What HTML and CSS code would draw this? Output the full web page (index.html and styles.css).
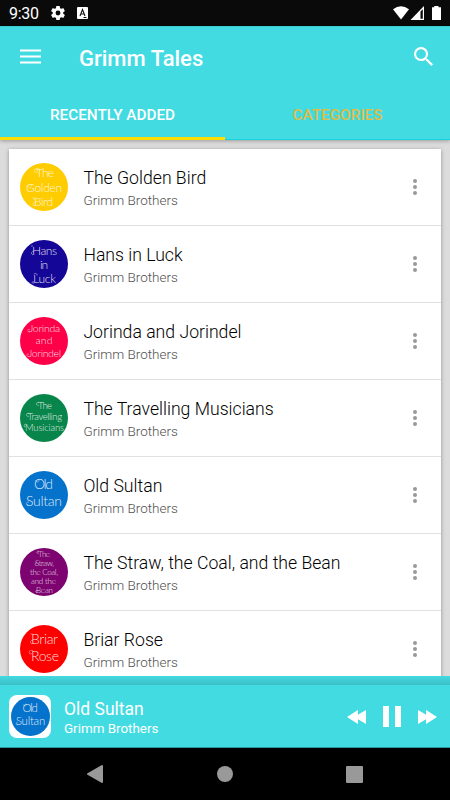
FILE: index.html
```html
<!DOCTYPE html>
<html lang="en">
<head>
<meta charset="utf-8">
<title>Grimm Tales</title>
<link rel="stylesheet" href="styles.css">
</head>
<body>
<div class="status">
  <span class="clock">9:30</span>
  <svg class="gear" width="14" height="14" viewBox="2 2 20 20"><path fill="#fff" d="M19.43 12.98c.04-.32.07-.64.07-.98s-.03-.66-.07-.98l2.11-1.65c.19-.15.24-.42.12-.64l-2-3.46c-.12-.22-.39-.3-.61-.22l-2.49 1c-.52-.4-1.08-.73-1.69-.98l-.38-2.65C14.46 2.18 14.25 2 14 2h-4c-.25 0-.46.18-.49.42l-.38 2.65c-.61.25-1.17.59-1.69.98l-2.49-1c-.23-.09-.49 0-.61.22l-2 3.46c-.13.22-.07.49.12.64l2.11 1.65c-.04.32-.07.65-.07.98s.03.66.07.98l-2.11 1.65c-.19.15-.24.42-.12.64l2 3.46c.12.22.39.3.61.22l2.49-1c.52.4 1.08.73 1.69.98l.38 2.65c.03.24.24.42.49.42h4c.25 0 .46-.18.49-.42l.38-2.65c.61-.25 1.17-.59 1.69-.98l2.49 1c.23.09.49 0 .61-.22l2-3.46c.12-.22.07-.49-.12-.64zM12 15.5a3.5 3.5 0 1 1 0-7 3.500 3.500 0 0 1 0 7z"/></svg>
  <svg class="lang" width="11" height="12" viewBox="0 0 11 12"><rect width="11" height="12" rx="1" fill="#fff"/><path d="M3 9 5.500 2.500 8 9M4 7h3M6.500 10.500h3" fill="none" stroke="#111" stroke-width="1.100"/></svg>
  <svg class="signals" width="49" height="15" viewBox="0 0 49 15"><path fill="#fff" d="M0 3.300Q8 -3 16 3.300L8 13.500z"/><path fill="#fff" d="M17.500 14 31 0v14z"/><path fill="#0a0a0a" d="M27.500 5.500 29.800 3.200v9.600h-2.300z"/><path fill="#fff" d="M41.200 0h4.300v1.200H48V14h-9V1.200h2.200z"/></svg>
</div>
<header class="appbar">
  <div class="toolbar">
    <svg class="menu" width="21" height="15" viewBox="0 0 21 15"><path stroke="#fff" stroke-width="2" d="M0 1.500h21M0 7.500h21M0 13.500h21"/></svg>
    <h1>Grimm Tales</h1>
    <svg class="search" width="19" height="19" viewBox="3 3 17.500 17.500"><path fill="#fff" d="M15.500 14h-.79l-.28-.27A6.470 6.470 0 0 0 16 9.500 6.500 6.500 0 1 0 9.500 16c1.610 0 3.090-.59 4.230-1.570l.27.28v.79l5 4.990L20.490 19l-4.990-5zm-6 0C7.010 14 5 11.990 5 9.500S7.010 5 9.500 5 14 7.010 14 9.500 11.990 14 9.500 14z"/></svg>
  </div>
  <nav class="tabs"><div class="tab active"><span>RECENTLY ADDED</span></div><div class="tab"><span>CATEGORIES</span></div></nav>
</header>
<main class="content">
  <div class="list">
    <div class="row">
      <svg class="cover" viewBox="0 0 48 48"><circle cx="24" cy="24" r="24" fill="#fc0"/><g class="art"><text x="16" y="14" font-size="12" textLength="18">The</text><text x="6" y="29" font-size="12" textLength="36">Golden</text><text x="14" y="43" font-size="12" textLength="19">Bird</text><path d="M19 5.500h-2c-4 0-3 5 0 4 2-1 0-3-1-2M8 23c0 3 4 2 3-1M15 34.500c-3 0-2 2 0 2M15 43c-4-1-1-5 1-3"/></g></svg>
      <div class="info"><h2>The Golden Bird</h2><p>Grimm Brothers</p></div><span class="more"><i></i><i></i><i></i></span>
    </div>
    <div class="row">
      <svg class="cover" viewBox="0 0 48 48"><circle cx="24" cy="24" r="24" fill="#140696"/><g class="art"><text x="12" y="15" font-size="12" textLength="25">Hans</text><text x="20" y="29" font-size="12" textLength="8">in</text><text x="13" y="43" font-size="12" textLength="23">Luck</text><path d="M13 6h-2M13 15c-3-1-1-5 1-3M14 34.500c0-2 4-1 3 1M14 42c-3-1-2 2 0 1"/></g></svg>
      <div class="info"><h2>Hans in Luck</h2><p>Grimm Brothers</p></div><span class="more"><i></i><i></i><i></i></span>
    </div>
    <div class="row">
      <svg class="cover" viewBox="0 0 48 48"><circle cx="24" cy="24" r="24" fill="#fe0047"/><g class="art"><text x="9" y="15" font-size="10.500" textLength="31">Jorinda</text><text x="15.500" y="27" font-size="10.500" textLength="17">and</text><text x="8" y="39.500" font-size="10.500" textLength="33">Jorindel</text><path d="M10 15c-4 0-2-4 0-2M9 39.500c-4 0-2-4 0-2"/></g></svg>
      <div class="info"><h2>Jorinda and Jorindel</h2><p>Grimm Brothers</p></div><span class="more"><i></i><i></i><i></i></span>
    </div>
    <div class="row">
      <svg class="cover" viewBox="0 0 48 48"><circle cx="24" cy="24" r="24" fill="#08854a"/><g class="art"><text x="18" y="15" font-size="9.500" textLength="14">The</text><text x="7.500" y="26" font-size="9.500" textLength="34.500">Travelling</text><text x="5" y="36.500" font-size="9.500" textLength="39">Musicians</text><path d="M19 8.200c-4 0-3 4 0 3M9 19.200c-4 0-3 4 0 3M6 30c-3 0-2 4 0 2.500"/></g></svg>
      <div class="info"><h2>The Travelling Musicians</h2><p>Grimm Brothers</p></div><span class="more"><i></i><i></i><i></i></span>
    </div>
    <div class="row">
      <svg class="cover" viewBox="0 0 48 48"><circle cx="24" cy="24" r="24" fill="#0572cb"/><g class="art"><text x="14" y="18" font-size="14" textLength="19">Old</text><text x="6" y="34.500" font-size="14" textLength="36">Sultan</text><path d="M15.500 9c1 4 5 1 3-1M8 34.500c-3-1-1-5 1-3"/></g></svg>
      <div class="info"><h2>Old Sultan</h2><p>Grimm Brothers</p></div><span class="more"><i></i><i></i><i></i></span>
    </div>
    <div class="row">
      <svg class="cover" viewBox="0 0 48 48"><circle cx="24" cy="24" r="24" fill="#7d0370"/><g class="art"><text x="18" y="8.500" font-size="8" textLength="12">The</text><text x="15" y="17.500" font-size="8" textLength="19">Straw,</text><text x="10" y="26.500" font-size="8" textLength="28">the Coal,</text><text x="11" y="35.500" font-size="8" textLength="25">and the</text><text x="16" y="44.500" font-size="8" textLength="17">Bean</text><path d="M19 3c-3 0-3 3 0 2M16 17.500c-2-1 0-4 1-2M17 44.500c-2 0-1-3 0-2"/></g></svg>
      <div class="info"><h2>The Straw, the Coal, and the Bean</h2><p>Grimm Brothers</p></div><span class="more"><i></i><i></i><i></i></span>
    </div>
    <div class="row">
      <svg class="cover" viewBox="0 0 48 48"><circle cx="24" cy="24" r="24" fill="#f00"/><g class="art"><text x="11" y="19" font-size="14" textLength="27">Briar</text><text x="11" y="35.500" font-size="14" textLength="28">Rose</text><path d="M12.500 9h-2M12 19c-3-1-1-5 1-3M13 25.500c-5-1-5 5-1 3"/></g></svg>
      <div class="info"><h2>Briar Rose</h2><p>Grimm Brothers</p></div><span class="more"><i></i><i></i><i></i></span>
    </div>
  </div>
</main>
<div class="shade"></div>
<section class="player">
  <div class="thumb"><svg width="39" height="39" viewBox="0 0 48 48"><circle cx="24" cy="24" r="24" fill="#0572cb"/><g class="art"><text x="14" y="18" font-size="14" textLength="19">Old</text><text x="6" y="34.500" font-size="14" textLength="36">Sultan</text><path d="M15.500 9c1 4 5 1 3-1M8 34.500c-3-1-1-5 1-3"/></g></svg></div>
  <div class="info"><h2>Old Sultan</h2><p>Grimm Brothers</p></div>
  <svg class="controls" width="90" height="21" viewBox="0 0 90 21"><path fill="#fff" d="M0 11 11 4v4.700L19 4v14l-8-4.700V18zM36 0h6v21h-6zM48 0h6v21h-6zM71 4l8 4.700V4l11 7-11 7v-4.700L71 18z"/></svg>
</section>
<nav class="system">
  <svg width="16" height="18" viewBox="0 0 16 18"><path d="M1 9 15 1v16z" fill="#999" stroke="#999" stroke-width="2" stroke-linejoin="round"/></svg>
  <span class="home"></span><span class="recent"></span>
</nav>
</body>
</html>
```
FILE: styles.css
```css
* { box-sizing: border-box; }
body { margin: 0; width: 450px; height: 800px; overflow: hidden; display: flex; flex-direction: column; background: #000; font-family: Roboto, "Liberation Sans", sans-serif; }
h1, h2, p { margin: 0; font-weight: 400; white-space: nowrap; }
svg { display: block; flex: none; }
.status { height: 26px; flex: none; background: #0a0a0a; color: #fff; display: flex; align-items: flex-start; padding: 6px 9px 0; }
.clock { font-size: 16px; line-height: 16px; width: 42.500px; letter-spacing: -.3px; }
.gear { margin-left: -.5px; }
.lang { margin: 1px 0 0 11.500px; }
.signals { margin-left: auto; margin-right: -1px; }
.appbar { height: 114px; flex: none; background: #42dbe2; color: #fff; display: flex; flex-direction: column; border-top: 1px solid #3bcbd2; position: relative; z-index: 1; box-shadow: 0 1px 4px rgba(0,0,0,.3); }
.toolbar { height: 62px; display: flex; align-items: center; padding: 0 17px 0 20px; }
.menu { margin-top: -3px; }
.toolbar h1 { font-size: 22px; font-weight: 500; line-height: 26px; margin-left: 38px; padding-top: 1px; }
.search { margin: -3px 0 0 auto; }
.tabs { flex: 1; display: flex; }
.tab { flex: 1; text-align: center; font-size: 15.300px; font-weight: 500; line-height: 18px; padding-top: 17px; color: #dfbc45; border-bottom: 1px solid #15d3df; }
.active { color: #fff; border-bottom: 3px solid #fd0; }
.content { flex: 1; min-height: 0; overflow: hidden; background: #dcdcdc; padding: 9px 9px 0; }
.list { background: #fff; box-shadow: 0 1px 4px rgba(0,0,0,.35); }
.row { height: 77.080px; border-bottom: 1px solid #e1e1e1; display: flex; align-items: flex-start; padding: 14px 24px 0 11px; }
.cover { width: 48px; height: 48px; margin-right: 15.400px; }
.art text { font-family: Lato, sans-serif; font-weight: 300; fill: rgba(255,255,255,.88); }
.art path { fill: none; stroke: rgba(255,255,255,.7); stroke-width: .6; }
.info { flex: 1; padding-top: 4px; color: #000; }
.info h2 { font-size: 17.650px; font-weight: 360; line-height: 22px; }
.info p { font-size: 13.500px; font-weight: 320; line-height: 18px; padding-top: 2px; color: #505050; }
.more { display: flex; flex-direction: column; gap: 2px; margin-top: 16px; }
.more i { width: 4px; height: 4px; border-radius: 50%; background: #999; }
.shade { height: 9px; flex: none; background: linear-gradient(#44d9e0, #3cbfc6); }
.player { height: 63px; flex: none; background: #42dbe2; border-bottom: 1px solid #259aa0; display: flex; align-items: flex-start; padding: 10px 13px 0 8.500px; }
.thumb { width: 42.500px; height: 43px; background: #fff; border-radius: 8px; padding: 2px; margin-right: 13px; }
.player .info { padding-top: 3px; }
.player h2, .player p { color: #fff; }
.player h2 { font-weight: 400; font-size: 17.500px; }
.player p { padding-top: 0; font-weight: 400; font-size: 13.400px; }
.controls { margin-top: 11px; }
.system { height: 52px; flex: none; display: grid; grid-template-columns: repeat(3, 129.500px); justify-content: center; justify-items: center; align-items: center; padding-right: 1px; }
.home { width: 16px; height: 16px; border-radius: 50%; background: #999; }
.recent { width: 17px; height: 17px; border-radius: 1px; background: #999; }
```
